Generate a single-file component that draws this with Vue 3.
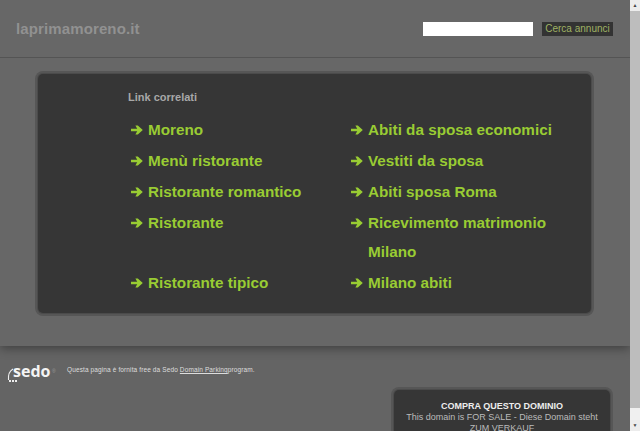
<script setup>
const rows = [
  ['Moreno', 'Abiti da sposa economici'],
  ['Menù ristorante', 'Vestiti da sposa'],
  ['Ristorante romantico', 'Abiti sposa Roma'],
  ['Ristorante', 'Ricevimento matrimonio Milano'],
  ['Ristorante tipico', 'Milano abiti'],
]
</script>

<template>
  <div class="window">
    <div class="page">
      <div class="band">
        <header class="top">
          <div class="domain">laprimamoreno.it</div>
          <form class="search" @submit.prevent>
            <input class="field" type="text" />
            <button class="go" type="submit">Cerca annunci</button>
          </form>
        </header>
        <main class="panel">
          <h2 class="title">Link correlati</h2>
          <div v-for="(row, i) in rows" :key="i" class="row">
            <a v-for="label in row" :key="label" class="link">
              <svg class="arrow" width="12" height="10" viewBox="0 0 12 10">
                <path d="M0 3.7 H6.2 L4.4 0.6 H6.8 L11.8 5 L6.8 9.4 H4.4 L6.2 6.3 H0 Z" fill="#99cc33" />
              </svg>
              <span class="label">{{ label }}</span>
            </a>
          </div>
        </main>
      </div>
      <footer class="foot">
        <div class="notes">
          <div class="logo">
            <svg class="swoosh" width="7" height="14" viewBox="0 0 7 14">
              <path d="M6 1 C2.5 3 1 7 1.5 12" fill="none" stroke="#eee" stroke-width="1.1" />
            </svg>
            <span class="sedo">sedo</span>
            <span class="mark">®</span>
            <span class="dots"><i></i><i></i><i></i></span>
          </div>
          <p class="credit">Questa pagina è fornita free da Sedo <u>Domain Parking</u>program.</p>
        </div>
        <section class="sale">
          <h3 class="sale-title">COMPRA QUESTO DOMINIO</h3>
          <p class="sale-text">This domain is FOR SALE - Diese Domain steht ZUM VERKAUF</p>
        </section>
      </footer>
    </div>
    <aside class="scrollbar">
      <div class="btn">▲</div>
      <div class="thumb"></div>
      <div class="track"></div>
      <div class="btn">▼</div>
    </aside>
  </div>
</template>

<style>
html, body { margin: 0; padding: 0; overflow: hidden; background: #666; }
</style>

<style scoped>
.window {
  display: flex;
  width: 640px;
  height: 431px;
  overflow: hidden;
  font-family: "Liberation Sans", Arial, sans-serif;
  background: #646464;
}
.page { flex: 1; min-width: 0; display: flex; flex-direction: column; }
.band {
  height: 346px;
  flex: none;
  background: #676767;
  box-shadow: 0 2px 10px rgba(0, 0, 0, .4);
  display: flex;
  flex-direction: column;
}
.top {
  height: 58px;
  flex: none;
  box-sizing: border-box;
  border-bottom: 1px solid #545454;
  display: flex;
  justify-content: space-between;
  padding: 20px 17px 0 16px;
}
.domain { font-size: 15px; font-weight: bold; color: #919191; line-height: 18px; letter-spacing: .12px; }
.search { display: flex; gap: 9px; height: 14px; margin-top: 2px; }
.field {
  width: 110px; height: 14px; box-sizing: border-box; border: 0; padding: 0; background: #fff;
}
.go {
  width: 71px; height: 14px; padding: 0; border: 0;
  background: #333;
  color: #9fb263;
  font: 10px/14px "Liberation Sans", Arial, sans-serif;
  white-space: nowrap;
}
.panel {
  width: 553px;
  height: 239px;
  margin: 16px 0 0 38px;
  box-sizing: border-box;
  padding: 16px 0 0 90px;
  background: #363636;
  border-radius: 5px;
  box-shadow: 0 0 0 1px #4b4b4b, 0 0 0 3px #565656;
}
.title { margin: 0 0 11px; font-size: 11px; line-height: 14px; font-weight: bold; color: #a8a8a8; }
.row { display: flex; margin-bottom: 2px; }
.link {
  width: 220px;
  flex: none;
  display: flex;
  align-items: flex-start;
  font-size: 15.25px;
  line-height: 29px;
  font-weight: bold;
  color: #9c3;
}
.arrow { flex: none; margin: 9.5px 5px 0 3px; }
.label { width: 190px; }
.foot { flex: 1; display: flex; flex-direction: column; }
.notes { display: flex; height: 44px; padding: 14px 0 0 7px; box-sizing: border-box; }
.logo { position: relative; width: 60px; height: 24px; }
.swoosh { position: absolute; left: 0; top: 8px; }
.sedo { position: absolute; left: 6px; top: 1px; font: bold 16px/20px "Open Sans", sans-serif; color: #f4f4f4; }
.mark { position: absolute; left: 45px; top: 8px; font-size: 5px; line-height: 6px; color: #999; }
.dots { position: absolute; left: 2px; top: 20px; display: flex; gap: 1px; }
.dots i { width: 2px; height: 2px; background: #eee; display: block; }
.credit { margin: 5px 0 0; font-size: 6.5px; line-height: 10px; color: #ddd; letter-spacing: .12px; white-space: nowrap; }
.sale {
  width: 216px;
  margin: 0 0 0 394px;
  flex: none;
  box-sizing: border-box;
  height: 80px;
  padding: 10px 0 0;
  background: #363636;
  border-radius: 5px;
  box-shadow: 0 0 0 1px #4b4b4b, 0 0 0 3px #565656;
  text-align: center;
}
.sale-title { margin: 0; font-size: 9px; line-height: 12px; font-weight: bold; color: #eee; }
.sale-text { margin: 0; font-size: 9px; line-height: 11px; color: #bbb; padding: 0 4px; }
.scrollbar {
  width: 10px;
  flex: none;
  display: flex;
  flex-direction: column;
  background: #f0f0f0;
}
.btn { height: 11px; font-size: 5px; line-height: 11px; text-align: center; color: #444; background: #ececec; flex: none; }
.thumb { height: 397px; flex: none; background: #bdbdbd; }
.track { flex: 1; }
</style>
